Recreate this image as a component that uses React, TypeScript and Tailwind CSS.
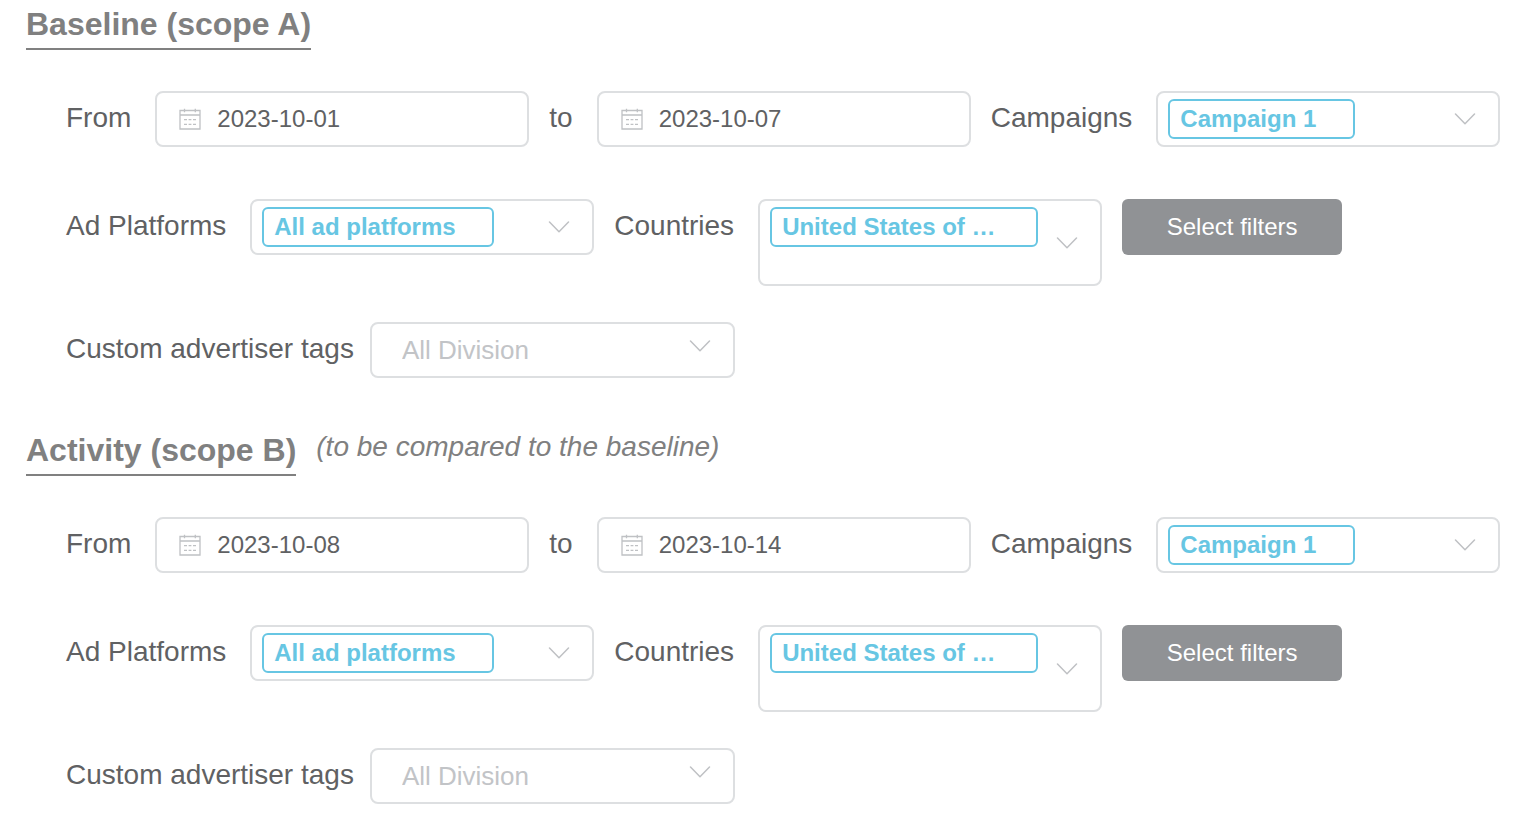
import { useId, useState } from "react";
import type { ReactNode } from "react";

const BOX = "flex max-w-full rounded-lg border-2 border-[#dddfe1] bg-white";
const LABEL = "text-[28px] leading-[54px] whitespace-nowrap text-[#606163]";

function CalendarIcon() {
  return (
    <svg
      className="size-[22px] shrink-0 text-[#bfc1c4]"
      viewBox="0 0 22 22"
      fill="none"
      stroke="currentColor"
      strokeWidth="1.3"
      aria-hidden="true"
    >
      <path d="M1 2.5H21V21H1ZM1 7H21M5.5 0.8V4.2M16.3 0.8V4.2" />
      <path d="M5 11.7H8M9.6 11.7H12.4M14 11.7H17M5 16.3H8M9.6 16.3H12.4M14 16.3H17" />
    </svg>
  );
}

function Chevron() {
  return (
    <svg
      className="h-3 w-[22px] shrink-0 text-[#bfc1c4]"
      viewBox="0 0 22 12"
      fill="none"
      stroke="currentColor"
      strokeWidth="1.5"
      strokeLinecap="round"
      strokeLinejoin="round"
      aria-hidden="true"
    >
      <path d="M1.5 1L11 10.7L20.5 1" />
    </svg>
  );
}

function Row({ children }: { children: ReactNode }) {
  return <div className="flex flex-wrap items-start gap-x-5 gap-y-6">{children}</div>;
}

function DateField({ label, initial }: { label: string; initial: string }) {
  const id = useId();
  const [value, setValue] = useState(initial);
  return (
    <div className="flex items-start gap-6">
      <label htmlFor={id} className={LABEL}>
        {label}
      </label>
      <div className={`${BOX} h-14 w-[374px] items-center gap-4 px-[22px]`}>
        <CalendarIcon />
        <input
          id={id}
          type="text"
          value={value}
          onChange={(e) => setValue(e.target.value)}
          className="w-full min-w-0 bg-transparent text-2xl text-[#606163] outline-none"
        />
      </div>
    </div>
  );
}

function TagSelect({ label, value, tall = false }: { label: string; value: string; tall?: boolean }) {
  const id = useId();
  return (
    <div className="flex items-start gap-6">
      <label htmlFor={id} className={LABEL}>
        {label}
      </label>
      <div
        className={`${BOX} w-[344px] items-center justify-between pr-[22px] pl-[10px] ${tall ? "h-[87px]" : "h-14"}`}
      >
        <select
          id={id}
          className={`mt-[6px] h-10 appearance-none self-start rounded-md border-2 border-[#67c6e3] bg-white pr-9 pl-[10px] text-2xl font-bold text-[#67c6e3] outline-none ${tall ? "w-[268px]" : ""}`}
        >
          <option>{value}</option>
        </select>
        <Chevron />
      </div>
    </div>
  );
}

function DivisionSelect() {
  const id = useId();
  return (
    <div className="flex items-start gap-4">
      <label htmlFor={id} className={LABEL}>
        Custom advertiser tags
      </label>
      <div className={`${BOX} h-14 w-[365px] items-start pr-[22px] pl-[30px]`}>
        <select
          id={id}
          className="h-full min-w-0 flex-1 appearance-none bg-transparent text-[26px] text-[#c2c4c7] outline-none"
        >
          <option>All Division</option>
        </select>
        <div className="flex h-11 items-center">
          <Chevron />
        </div>
      </div>
    </div>
  );
}

interface ScopeProps {
  title: string;
  note?: string;
  from: string;
  to: string;
}

function Scope({ title, note, from, to }: ScopeProps) {
  return (
    <section>
      <div className="flex flex-wrap items-start gap-x-5">
        <h2 className="border-b-2 border-[#808080] text-[32px] leading-[48px] font-bold text-[#808080]">{title}</h2>
        {note && <p className="text-[28px] leading-[42px] text-[#808080] italic">{note}</p>}
      </div>
      <div className="mt-[41px] pl-10">
        <Row>
          <DateField label="From" initial={from} />
          <DateField label="to" initial={to} />
          <TagSelect label="Campaigns" value="Campaign 1" />
        </Row>
        <div className="mt-[52px]">
          <Row>
            <TagSelect label="Ad Platforms" value="All ad platforms" />
            <TagSelect label="Countries" value="United States of …" tall />
            <button type="button" className="h-14 w-[220px] rounded-md bg-[#909295] text-2xl text-white">
              Select filters
            </button>
          </Row>
        </div>
        <div className="mt-9">
          <DivisionSelect />
        </div>
      </div>
    </section>
  );
}

export default function App() {
  return (
    <main className="flex flex-col gap-12 bg-white pr-4 pb-4 pl-[26px] font-['Liberation_Sans',Arial,sans-serif]">
      <Scope title="Baseline (scope A)" from="2023-10-01" to="2023-10-07" />
      <Scope
        title="Activity (scope B)"
        note="(to be compared to the baseline)"
        from="2023-10-08"
        to="2023-10-14"
      />
    </main>
  );
}
